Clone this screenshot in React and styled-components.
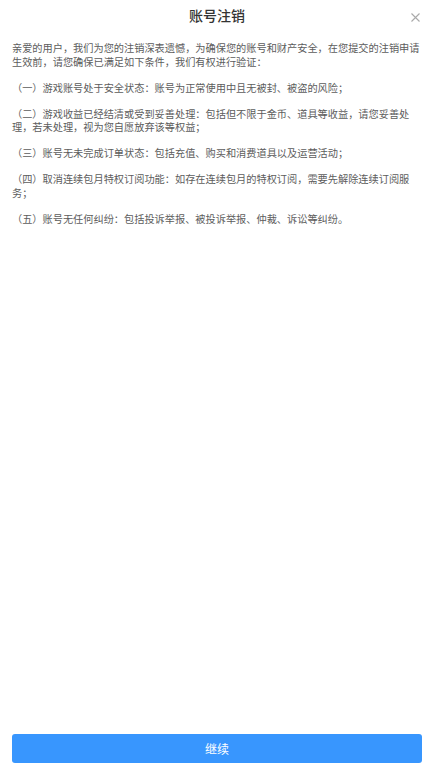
import React from 'react'
import styled, { createGlobalStyle } from 'styled-components'

const GlobalStyle = createGlobalStyle`
  html, body {
    margin: 0;
    padding: 0;
    background: #fff;
  }
  body {
    font-family: "Noto Sans CJK SC", "Noto Sans", sans-serif;
  }
`

const Page = styled.div`
  min-height: 100vh;
  display: flex;
  flex-direction: column;
  box-sizing: border-box;
  padding: 0 12px 8px;
`

const Header = styled.header`
  position: relative;
  height: 30px;
  display: flex;
  align-items: center;
  justify-content: center;
`

const Title = styled.h1`
  margin: 0;
  font-size: 14px;
  font-weight: 500;
  color: #333;
`

const Close = styled.button`
  position: absolute;
  right: 1px;
  top: 11px;
  width: 12px;
  height: 12px;
  padding: 0;
  border: none;
  background: transparent;
  display: flex;
  align-items: center;
  justify-content: center;
  cursor: pointer;
`

const Body = styled.div`
  flex: 1;
  padding-top: 11px;
`

const Para = styled.p`
  margin: 0 0 12.6px;
  font-size: 10.2px;
  line-height: 13.5px;
  color: #5c5c5c;
`

const Continue = styled.button`
  width: 100%;
  height: 29px;
  border: none;
  border-radius: 3px;
  background: #3896fe;
  color: #fff;
  font-family: inherit;
  font-size: 12px;
  cursor: pointer;
`

const items = [
  '亲爱的用户，我们为您的注销深表遗憾，为确保您的账号和财产安全，在您提交的注销申请生效前，请您确保已满足如下条件，我们有权进行验证：',
  '（一）游戏账号处于安全状态：账号为正常使用中且无被封、被盗的风险；',
  '（二）游戏收益已经结清或受到妥善处理：包括但不限于金币、道具等收益，请您妥善处理，若未处理，视为您自愿放弃该等权益；',
  '（三）账号无未完成订单状态：包括充值、购买和消费道具以及运营活动；',
  '（四）取消连续包月特权订阅功能：如存在连续包月的特权订阅，需要先解除连续订阅服务；',
  '（五）账号无任何纠纷：包括投诉举报、被投诉举报、仲裁、诉讼等纠纷。',
]

const App = () => {
  return (
    <>
      <GlobalStyle />
      <Page>
        <Header>
          <Title>账号注销</Title>
          <Close aria-label="关闭">
            <svg width="9" height="9" viewBox="0 0 9 9">
              <path d="M0.5 0.5 L8.5 8.5 M8.5 0.5 L0.5 8.5" stroke="#aaa" strokeWidth="1.1" />
            </svg>
          </Close>
        </Header>
        <Body>
          {items.map((t, i) => (
            <Para key={i}>{t}</Para>
          ))}
        </Body>
        <Continue>继续</Continue>
      </Page>
    </>
  )
}

export default App
